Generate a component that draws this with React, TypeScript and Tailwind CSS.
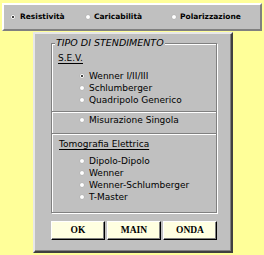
import React from "react";

const Radio = ({ checked = false }: { checked?: boolean }) => (
  <span className="w-[6px] h-[6px] rounded-full bg-white border border-[#b4b4b4] flex items-center justify-center shrink-0">
    {checked && <span className="w-[2px] h-[2px] rounded-full bg-black" />}
  </span>
);

const Option = ({ label, checked = false }: { label: string; checked?: boolean }) => (
  <div className="h-[12px] flex items-center gap-[4px] pl-[27px]">
    <Radio checked={checked} />
    <span className="leading-none">{label}</span>
  </div>
);

const Separator = () => <div className="h-[1px] border-t border-[#808080] bg-white box-content" />;

const Heading = ({ children }: { children: React.ReactNode }) => (
  <div className="h-[12px] flex items-center leading-none underline underline-offset-2">{children}</div>
);

export default function App() {
  return (
    <div className="w-[264px] h-[255px] bg-[#ffff99] pt-[3px] pl-[2px] overflow-hidden">
      <div className="w-[260px] h-[28px] bg-[#c0c0c0] border-2 border-t-white border-l-white border-b-[#808080] border-r-[#808080] flex items-center pl-[6px] font-['DejaVu_Sans',sans-serif] text-[7.5px] font-bold text-black">
        <div className="w-[75px] flex items-center gap-[4px]">
          <Radio checked />
          <span>Resistività</span>
        </div>
        <div className="w-[86px] flex items-center gap-[3px]">
          <Radio />
          <span>Caricabilità</span>
        </div>
        <div className="flex items-center gap-[3px]">
          <Radio />
          <span>Polarizzazione</span>
        </div>
      </div>

      <div className="ml-[31px] mt-[1px] w-[200px] h-[221px] bg-[#c0c0c0] border-2 border-t-[#e8e8e8] border-l-[#e8e8e8] border-b-[#404040] border-r-[#404040] shadow-[inset_-1px_-1px_0_#808080] pl-[16px] font-['DejaVu_Sans',sans-serif] text-[9px] text-black">
        <fieldset className="mt-[3px] w-[166px] h-[176px] border border-[#808080] shadow-[inset_1px_1px_0_#fff,1px_1px_0_#fff] p-0">
          <legend className="ml-[3px] px-[1px] bg-[#c0c0c0] italic text-[9.5px] leading-[12px]">TIPO DI STENDIMENTO</legend>
          <div className="pt-[3px] pl-[6px]">
            <Heading>S.E.V.</Heading>
          </div>
          <div className="mt-[6px]">
            <Option label="Wenner I/II/III" checked />
            <Option label="Schlumberger" />
            <Option label="Quadripolo Generico" />
          </div>
          <div className="mt-[5px]">
            <Separator />
          </div>
          <div className="mt-[1px]">
            <Option label="Misurazione Singola" />
          </div>
          <div className="mt-[7px]">
            <Separator />
          </div>
          <div className="mt-[3px] pl-[7px]">
            <Heading>Tomografia Elettrica</Heading>
          </div>
          <div className="mt-[5px]">
            <Option label="Dipolo-Dipolo" />
            <Option label="Wenner" />
            <Option label="Wenner-Schlumberger" />
            <Option label="T-Master" />
          </div>
        </fieldset>

        <div className="mt-[8px] flex gap-[2px] font-['Liberation_Serif',serif] font-bold text-[9.5px]">
          {["OK", "MAIN", "ONDA"].map((b) => (
            <button
              key={b}
              className="w-[54px] h-[19px] bg-[#ffffe1] border border-t-white border-l-white border-b-black border-r-black shadow-[inset_-1px_-1px_0_#808080] flex items-center justify-center leading-none"
            >
              {b}
            </button>
          ))}
        </div>
      </div>
    </div>
  );
}
